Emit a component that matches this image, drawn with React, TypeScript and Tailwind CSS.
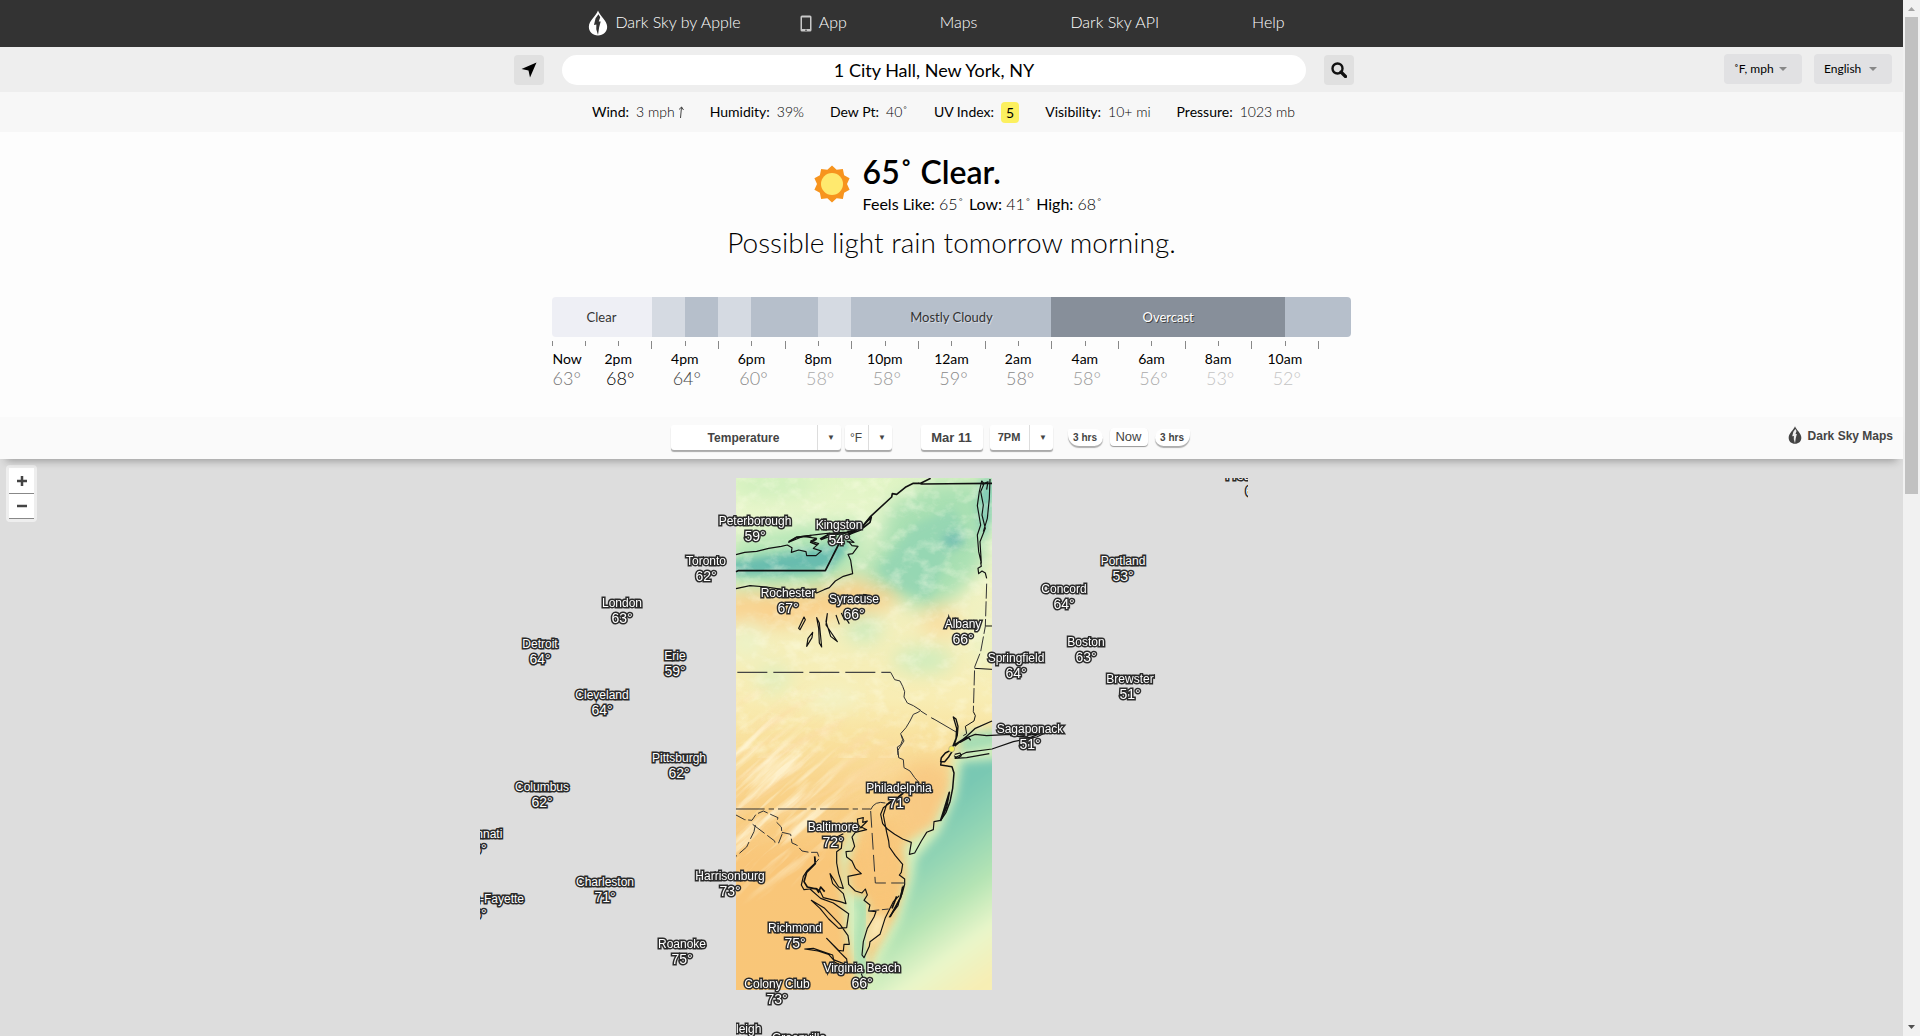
import React from "react";

const conditions = [
  { label: "Humidity:", value: "39%" },
  { label: "Dew Pt:", value: "40˚" },
];

const segments = [
  { span: "col-span-3", tone: "bg-[#eeeff5] text-[#333] rounded-l", text: "Clear" },
  { span: "col-span-1", tone: "bg-[#d5dae2]", text: "" },
  { span: "col-span-1", tone: "bg-[#b6bfcb]", text: "" },
  { span: "col-span-1", tone: "bg-[#d5dae2]", text: "" },
  { span: "col-span-2", tone: "bg-[#b6bfcb]", text: "" },
  { span: "col-span-1", tone: "bg-[#d5dae2]", text: "" },
  { span: "col-span-6", tone: "bg-[#b6bfcb] text-[#333] [text-shadow:1px_1px_0_#d5dae2]", text: "Mostly Cloudy" },
  { span: "col-span-7", tone: "bg-[#878f9a] text-white [text-shadow:1px_1px_0_#444]", text: "Overcast" },
  { span: "col-span-2", tone: "bg-[#b6bfcb] rounded-r-sm", text: "" },
];

const hours = [
  { time: "2pm", temp: "68°", tone: "text-black" },
  { time: "4pm", temp: "64°", tone: "text-[#444]" },
  { time: "6pm", temp: "60°", tone: "text-[#888]" },
  { time: "8pm", temp: "58°", tone: "text-[#aaa]" },
  { time: "10pm", temp: "58°", tone: "text-[#999]" },
  { time: "12am", temp: "59°", tone: "text-[#888]" },
  { time: "2am", temp: "58°", tone: "text-[#888]" },
  { time: "4am", temp: "58°", tone: "text-[#999]" },
  { time: "6am", temp: "56°", tone: "text-[#aaa]" },
  { time: "8am", temp: "53°", tone: "text-[#c4c4c4]" },
  { time: "10am", temp: "52°", tone: "text-[#c4c4c4]" },
];

const ticks = Array.from({ length: 24 }, (_, i) => i);

type City = { name: string; temp: string; x: number; y: number };

const cities: City[] = [
  { name: "Peterborough", temp: "59°", x: 275, y: 43 },
  { name: "Kingston", temp: "54°", x: 359, y: 47 },
  { name: "Toronto", temp: "62°", x: 226, y: 83 },
  { name: "Rochester", temp: "67°", x: 308, y: 115 },
  { name: "Syracuse", temp: "66°", x: 374, y: 121 },
  { name: "Albany", temp: "66°", x: 483, y: 146 },
  { name: "Springfield", temp: "64°", x: 536, y: 180 },
  { name: "Sagaponack", temp: "51°", x: 550, y: 251 },
  { name: "London", temp: "63°", x: 142, y: 125 },
  { name: "Detroit", temp: "64°", x: 60, y: 166 },
  { name: "Erie", temp: "59°", x: 195, y: 178 },
  { name: "Cleveland", temp: "64°", x: 122, y: 217 },
  { name: "Pittsburgh", temp: "62°", x: 199, y: 280 },
  { name: "Columbus", temp: "62°", x: 62, y: 309 },
  { name: "Cincinnati", temp: "66°", x: -4, y: 356 },
  { name: "Lexington-Fayette", temp: "66°", x: -4, y: 421 },
  { name: "Charleston", temp: "71°", x: 125, y: 404 },
  { name: "Harrisonburg", temp: "73°", x: 250, y: 398 },
  { name: "Roanoke", temp: "75°", x: 202, y: 466 },
  { name: "Philadelphia", temp: "71°", x: 419, y: 310 },
  { name: "Baltimore", temp: "72°", x: 353, y: 349 },
  { name: "Richmond", temp: "75°", x: 315, y: 450 },
  { name: "Virginia Beach", temp: "66°", x: 382, y: 490 },
  { name: "Colony Club", temp: "73°", x: 297, y: 506 },
  { name: "Portland", temp: "53°", x: 643, y: 83 },
  { name: "Concord", temp: "64°", x: 584, y: 111 },
  { name: "Boston", temp: "63°", x: 606, y: 164 },
  { name: "Brewster", temp: "51°", x: 650, y: 201 },
  { name: "Fredericton", temp: "62°", x: 776, y: -2 },
  { name: "Greenville", temp: "72°", x: 319, y: 560 },
];

function CityLabel({ name, temp, x, y }: City) {
  return (
    <div
      className="absolute -translate-x-1/2 whitespace-nowrap text-center leading-[15px] text-white [paint-order:stroke_fill] [-webkit-text-stroke:3px_#2a2a2a]"
      style={{ left: x, top: y - 7 }}
    >
      <div className="text-xs leading-[15px]">{name}</div>
      <div className="text-sm leading-[15px]">{temp}</div>
    </div>
  );
}

function DropLogo({ className, ink, cut }: { className: string; ink: string; cut: string }) {
  return (
    <svg viewBox="0 0 20 27" className={className} aria-hidden="true">
      <path d="M10 .5C11.500 5.500 19.500 11 19.500 17.500C19.500 23 15.500 26.500 10 26.500S.5 23 .5 17.500C.5 11 8.500 5.500 10 .5Z" fill={ink} />
      <path d="M10.500 4.500L7.500 8.500L5.800 15.500L8.300 15L8.200 20L10 26L11.200 18L12.800 12L10.800 12L12.300 7.500Z" fill={cut} />
    </svg>
  );
}

function Sun() {
  const points = Array.from({ length: 20 }, (_, i) => {
    const r = i % 2 ? 15 : 18.500;
    const a = (i * Math.PI) / 10 - Math.PI / 2;
    return `${19 + r * Math.cos(a)},${19 + r * Math.sin(a)}`;
  }).join(" ");
  return (
    <svg viewBox="0 0 38 38" className="size-[38px]" aria-hidden="true">
      <polygon points={points} fill="#f7941e" />
      <circle cx="19" cy="19" r="11" fill="#ffe96e" />
    </svg>
  );
}

function TemperatureTile() {
  return (
    <svg viewBox="0 0 256 512" className="absolute left-64 top-0 h-[512px] w-64 overflow-visible" aria-hidden="true">
      <defs>
        <clipPath id="tile"><rect width="256" height="512" /></clipPath>
        <linearGradient id="land" x1="0" x2="0" y1="0" y2="1">
          <stop offset="0" stopColor="#dff4c3" />
          <stop offset=".1" stopColor="#ecf7cf" />
          <stop offset=".3" stopColor="#f4efbb" />
          <stop offset=".43" stopColor="#f8edb4" />
          <stop offset=".5" stopColor="#f9e3a0" />
          <stop offset=".6" stopColor="#f9d48b" />
          <stop offset=".75" stopColor="#f9c679" />
          <stop offset="1" stopColor="#f9c678" />
        </linearGradient>
        <linearGradient id="sea" gradientUnits="userSpaceOnUse" x1="560" y1="330" x2="860" y2="740">
          <stop offset="0" stopColor="#79c8b3" />
          <stop offset=".25" stopColor="#93d5b4" />
          <stop offset=".5" stopColor="#b5e4b4" />
          <stop offset=".75" stopColor="#e9f6ca" />
          <stop offset="1" stopColor="#f7eeb4" />
        </linearGradient>
        <filter id="soft" x="-30%" y="-30%" width="160%" height="160%"><feGaussianBlur stdDeviation="14" /></filter>
        <filter id="softer" x="-40%" y="-40%" width="180%" height="180%"><feGaussianBlur stdDeviation="28" /></filter>
        <filter id="terrain" x="0" y="0" width="100%" height="100%">
          <feTurbulence type="fractalNoise" baseFrequency=".06 .08" numOctaves="5" seed="7" />
          <feColorMatrix values="0 0 0 0 1  0 0 0 0 1  0 0 0 0 .82  2.400 0 0 0 -1.100" />
        </filter>
        <filter id="ridges" x="0" y="0" width="100%" height="100%">
          <feTurbulence type="fractalNoise" baseFrequency=".012 .09" numOctaves="4" seed="11" />
          <feColorMatrix values="0 0 0 0 .97  0 0 0 0 .7  0 0 0 0 .38  3 0 0 0 -1.300" />
        </filter>
        <filter id="streaks" x="0" y="0" width="100%" height="100%">
          <feTurbulence type="fractalNoise" baseFrequency=".012 .11" numOctaves="4" seed="5" />
          <feColorMatrix values="0 0 0 0 1  0 0 0 0 .93  0 0 0 0 .7  3.500 0 0 0 -1.700" />
        </filter>
        <radialGradient id="fade"><stop offset="0" stopColor="#fff" /><stop offset=".5" stopColor="#fff" /><stop offset="1" stopColor="#000" /></radialGradient>
        <mask id="west"><ellipse cx="40" cy="290" rx="170" ry="90" fill="url(#fade)" /></mask>
        <mask id="southwest"><ellipse cx="20" cy="320" rx="110" ry="110" fill="url(#fade)" /></mask>
      </defs>
      <g clipPath="url(#tile)">
        <rect width="256" height="512" fill="url(#land)" />
        <g transform="translate(-36 -13) scale(.33333)">
          <g filter="url(#softer)">
            <ellipse cx="220" cy="60" rx="130" ry="30" fill="#cdefbd" />
            <path d="M90 220L300 180L500 170L470 340L380 380L90 370Z" fill="#b4e6b6" />
            <path d="M570 120L700 50L890 50L850 300L760 400L680 440L560 390L480 330L530 240Z" fill="#a9e0b3" />
            <path d="M60 390L340 375L450 340L610 390L560 430L300 480L60 490Z" fill="#fad08a" />
            <ellipse cx="720" cy="470" rx="60" ry="50" fill="#f9dfa2" />
            <ellipse cx="670" cy="585" rx="90" ry="38" fill="#cdecbd" />
            <ellipse cx="490" cy="490" rx="55" ry="45" fill="#cdecbf" />
            <ellipse cx="220" cy="640" rx="50" ry="40" fill="#deefc0" />
            <ellipse cx="400" cy="700" rx="80" ry="30" fill="#f2f3c8" />
            <ellipse cx="140" cy="520" rx="50" ry="60" fill="#ecf3c8" />
            <ellipse cx="850" cy="520" rx="30" ry="90" fill="#eaf4c8" />
          </g>
          <g filter="url(#soft)">
            <path d="M80 290L260 262L400 240L450 225L430 270L380 320L240 330L80 330Z" fill="#67bcae" />
            <path d="M640 180L760 130L800 200L730 300L690 400L610 380L530 320Z" fill="#8fd3b4" opacity=".7" />
            <ellipse cx="760" cy="225" rx="32" ry="20" fill="#72bdb2" />
            <path d="M845 40H880L868 180L845 220L838 140Z" fill="#76c6b4" />
          </g>
        </g>
        <rect width="256" height="280" filter="url(#terrain)" opacity=".4" />
        <g mask="url(#west)">
          <rect x="-200" y="60" width="600" height="480" filter="url(#ridges)" opacity=".55" transform="rotate(-32 40 290)" />
        </g>
        <g mask="url(#southwest)">
          <rect x="-200" y="60" width="600" height="480" filter="url(#streaks)" opacity=".8" transform="rotate(-42 40 290)" />
        </g>
        <g transform="translate(-36 257) scale(.33333)">
          <ellipse cx="680" cy="200" rx="90" ry="120" fill="#f8c983" filter="url(#softer)" />
          <ellipse cx="540" cy="350" rx="50" ry="100" fill="#f8c67c" filter="url(#softer)" />
          <path d="M780 0L900 -20V60L780 70Z" fill="#a5dcb4" filter="url(#soft)" />
          <path d="M760 60L900 30V800H480L520 660L590 540L620 430L610 330L700 270L750 160Z" fill="#d4efbd" filter="url(#soft)" />
          <path d="M785 80L920 70V820H500L545 670L600 560L640 430L650 370L720 290L770 180Z" fill="url(#sea)" filter="url(#soft)" />
          <path d="M455 280L480 260L440 400L450 470L505 500L500 640L520 780H480L440 600L430 500L420 360Z" fill="#d3efbf" filter="url(#soft)" />
          <path d="M470 490L490 520L480 640L490 720" fill="none" stroke="#a6deb0" strokeWidth="30" filter="url(#soft)" />
          <path d="M520 540L500 640L540 600L560 540Z" fill="#faefc0" filter="url(#soft)" />
        </g>
      </g>
      <g transform="translate(-36 -13) scale(.33333)" fill="none" stroke="#111" strokeWidth="3.500" strokeLinejoin="round">
        <path strokeWidth="5" d="M108 320L114 317H376L418 234L440 210L486 186L512 154L575 96L577 86L590 88L616 67L640 55H662L692 40M654 54L665 57L876 55" />
        <path d="M108 269L134 262L170 259L206 250L244 244L262 240L276 248L274 262L296 255L318 260L320 272L348 272L364 258L340 250L356 236L332 228L350 220L310 214L266 232L290 216L356 208L390 204L364 224L400 210L430 206L470 196L440 214L462 232L440 230" />
        <path strokeWidth="5" d="M266 230L290 217L334 212M350 222L332 232L352 240M360 222L390 206L440 202L484 188L514 156L510 172L480 196L436 212" />
        <path d="M446 230L456 242L474 244L458 266L444 268L452 286L458 326L430 334L406 348L388 368L372 374L350 384L338 374L300 382L250 374L200 366L150 362L108 371" />
        <path d="M312 456L316 464L300 494L296 490ZM338 502L336 518L320 544L324 520ZM350 458L358 474L365 546L358 534L356 490ZM382 446L378 480L412 530L392 514L378 470ZM408 450L418 478M424 444L434 466M470 390L508 392L490 388M434 454L448 476" />
        <path d="M845 48L852 56L842 80L850 120L846 150L856 190L840 230L844 294L836 260L832 210L842 180L832 122L838 80ZM870 42L868 100L862 160L850 200M846 58L864 50L860 74" />
        <path d="M842 292L844 304L834 310L836 326L846 318L856 324L860 340" />
        <path strokeWidth="3" stroke="#333" strokeDasharray="45 8" d="M860 356L856 484L842 560L824 606L820 740" />
        <path strokeWidth="3" d="M856 483H876M824 610L876 613M820 740L826 752L822 768L796 784L800 806L790 812" />
        <path strokeWidth="4" stroke="#444" strokeDasharray="90 18" d="M112 622H572" />
        <path strokeWidth="3" stroke="#333" d="M572 622L584 644L600 648L608 664L614 680L612 696L622 714L640 722L662 736L654 742L640 748L630 768L618 788L602 806L608 824L602 840L592 846L594 870" />
        <path strokeWidth="3" stroke="#333" strokeDasharray="22 15" d="M662 738L700 762" />
        <path strokeWidth="3" stroke="#333" d="M698 760L770 802" />
        <path strokeWidth="4" d="M760 756L768 762L774 784L772 810L764 836L756 850L768 820L770 790ZM762 840L790 822L826 808L860 812L930 808L985 810M764 844L800 814L826 790L876 768M780 832L806 818L812 826" />
        <path d="M764 878L800 862L876 852L940 830L1010 816L1060 792L1020 806L960 814M930 812L990 818L1020 806M984 808L1030 794L1042 796" />
      </g>
      <g transform="translate(-36 257) scale(.33333)" fill="none" stroke="#111" strokeWidth="3.500" strokeLinejoin="round">
        <path d="M764 58L780 54L784 62L772 70L762 62M764 70L800 68L868 56" />
        <path strokeWidth="4.500" d="M752 46L736 54L724 68L722 80L734 80L746 66L756 50M724 78L722 90L756 95L762 114L758 160L750 200L738 232L722 256" />
        <path strokeWidth="5" d="M748 172L740 216L722 256L732 224ZM610 174L588 192L566 204" />
        <path d="M722 256L702 260L700 284L680 292L664 318L644 354L628 358L634 322L608 312L584 298L562 282L548 266L542 238L550 218L580 196L560 208L550 240L560 292L566 318L568 336L586 362L608 388L604 412L598 420L614 432L614 448L606 478L580 530L568 546L594 512L610 452" />
        <path strokeWidth="5" d="M608 456L602 488L570 546M590 484L576 520" />
        <path d="M598 482L580 500L556 548L540 598L510 620L508 634L492 668L486 660L490 620L502 580L522 546L528 530L506 528L510 510L492 496L502 480L496 462L486 474L466 468L446 448L444 424L484 416L466 400L456 378L440 366L438 350L456 348L464 334L456 306L466 292L500 284L484 276L502 258L488 262L490 248L472 252L474 268L484 280" />
        <path d="M430 296L410 306L426 320L424 340L410 350L410 384L416 416L430 460L416 456L390 416L398 446L430 476L438 506L420 500L370 488L360 468L348 460L330 462L312 464L304 450L310 424L322 406L346 384L344 368" />
        <path strokeWidth="5" d="M344 364L346 386L320 412L312 440L322 456L350 462L356 472L362 456L374 470" />
        <path d="M330 462L362 490L400 504L446 536L440 578L416 580L386 552L360 520L334 496L374 520L420 568L444 602L448 628L432 628L430 648L416 646L380 610L420 652L440 672L442 690L400 674L386 658L354 648L314 642L340 640L398 660L402 680L420 690M484 716L494 744L500 762" />
        <g stroke="#333" strokeWidth="3">
          <path d="M604 0L612 18L600 36L594 46L596 68L610 74L612 98L630 108L644 128L658 144" />
          <path strokeDasharray="86 12 16 12" d="M108 222H512" />
          <path d="M512 224Q524 196 556 204" />
          <path strokeDasharray="50 16" d="M512 228L526 444H614" />
          <path strokeDasharray="32 8" d="M506 528L566 522M108 240L134 254L156 256L168 238L190 228L216 240L234 248L230 262L244 276L246 298L236 324L222 320M246 292L272 298L276 324L290 330L306 348L328 352L352 352L358 370L346 384" />
          <path strokeDasharray="45 10" d="M158 268L224 318M166 270L162 290L152 310L140 336L108 364" />
        </g>
      </g>
      <circle cx="215.700" cy="271" r="3" fill="#f8ee5e" stroke="#888" strokeWidth=".5" />
    </svg>
  );
}

const box = "bg-white rounded-[3px] shadow-[0_2px_1px_rgba(0,0,0,0.32)]";

function PickerSelect({ label, option, className }: { label: string; option: string; className: string }) {
  return (
    <div className={`relative flex h-[25px] text-[#444] ${box}`}>
      <select aria-label={label} className={`appearance-none border-0 bg-transparent pr-6 text-center ${className}`}>
        <option>{option}</option>
      </select>
      <span className="pointer-events-none absolute inset-y-0 right-0 flex w-6 items-center justify-center border-l border-[#ddd] pl-1 text-[8px]">▼</span>
    </div>
  );
}

function UnitSelect({ label, option }: { label: string; option: string }) {
  return (
    <div className="relative">
      <select aria-label={label} className="h-[30px] w-[78px] appearance-none rounded bg-[#e1e1e3] pl-2.5 text-xs text-black">
        <option>{option}</option>
      </select>
      <svg viewBox="0 0 8 4" className="pointer-events-none absolute right-[15px] top-[13px] h-1 w-2" aria-hidden="true">
        <path d="M0 0H8L4 4Z" fill="#888" />
      </svg>
    </div>
  );
}

export default function App() {
  return (
    <div className="flex min-h-screen bg-[#fdfdfd] font-['Lato',sans-serif] text-black">
      <div className="flex min-w-0 flex-1 flex-col">
        <nav className="flex h-[47px] justify-center bg-[#333] pr-[30px] text-base font-light leading-[43px] text-white">
          <a href="#home" className="mr-[59px] flex">
            <DropLogo className="mr-[7px] mt-2.5 h-[26px] w-5" ink="#fff" cut="#333" />
            Dark Sky by Apple
          </a>
          <a href="#app" className="mr-[93px] flex">
            <svg viewBox="0 0 12 17" className="mr-[7px] mt-[15px] h-[17px] w-3" aria-hidden="true">
              <rect x=".5" y=".5" width="11" height="16" rx="1.500" fill="#c9c9c9" />
              <rect x="2" y="2.500" width="8" height="11.500" fill="#333" />
              <circle cx="6" cy="15.300" r=".8" fill="#333" />
            </svg>
            App
          </a>
          <a href="#maps" className="mr-[93px]">Maps</a>
          <a href="#api" className="mr-[93px]">Dark Sky API</a>
          <a href="#help">Help</a>
        </nav>

        <form className="grid h-[45px] grid-cols-[1fr_auto_1fr] bg-[#eee]" onSubmit={(e) => e.preventDefault()}>
          <div />
          <div className="mr-[35px] flex items-center gap-[18px] pt-px">
            <button type="button" aria-label="Use current location" className="flex size-[30px] items-center justify-center rounded bg-[#e0e0e0]">
              <svg viewBox="0 0 16 16" className="size-4" aria-hidden="true">
                <path d="M15.500 .5L9 15.500L7.500 8.500L.5 7Z" fill="#000" />
              </svg>
            </button>
            <input aria-label="Location" defaultValue="1 City Hall, New York, NY" className="h-[30px] w-[744px] rounded-full bg-white text-center text-lg outline-none" />
            <button type="submit" aria-label="Search" className="flex size-[30px] items-center justify-center rounded bg-[#e0e0e0]">
              <svg viewBox="0 0 16 16" className="size-4" aria-hidden="true">
                <circle cx="6.500" cy="6.500" r="5" fill="none" stroke="#111" strokeWidth="2.400" />
                <path d="M10 10L14.500 14.500" stroke="#111" strokeWidth="3.200" strokeLinecap="round" />
              </svg>
            </button>
          </div>
          <div className="flex items-start justify-end gap-3 pr-[11px] pt-[7px]">
            <UnitSelect label="Units" option="˚F, mph" />
            <UnitSelect label="Language" option="English" />
          </div>
        </form>

        <section className="flex h-10 items-center justify-center gap-[26px] bg-[#f7f7f7] pr-4 text-sm">
          <div className="flex gap-[7px]">
            Wind:
            <span className="flex items-center gap-[3px] font-light">
              3 mph
              <svg viewBox="0 0 6 12" className="h-3 w-1.5" fill="none" stroke="#444" aria-label="from the south">
                <path d="M2.500 12L3.500 1M1 3.500L3.600 1L5.500 4" />
              </svg>
            </span>
          </div>
          {conditions.map((c) => (
            <div key={c.label} className="flex gap-[7px]">{c.label} <span className="font-light">{c.value}</span></div>
          ))}
          <div className="flex items-center gap-[7px]">UV Index: <span className="rounded-sm bg-[#fcf05f] px-[5px] leading-[21px]">5</span></div>
          <div className="flex gap-[7px]">Visibility: <span className="font-light">10+ mi</span></div>
          <div className="flex gap-[7px]">Pressure: <span className="font-light">1023 mb</span></div>
        </section>

        <main className="flex flex-col items-center">
          <div className="mt-5 flex gap-3 pl-3">
            <div className="mt-[13px]"><Sun /></div>
            <div>
              <h1 className="text-[32px] font-semibold leading-10">65˚ Clear.</h1>
              <p className="flex gap-[5px] text-base leading-6">
                <span>Feels Like: <span className="font-light">65˚</span></span>
                <span>Low: <span className="font-light">41˚</span></span>
                <span>High: <span className="font-light">68˚</span></span>
              </p>
            </div>
          </div>
          <p className="mt-[7px] text-[28px] font-light leading-[38px]">Possible light rain tomorrow morning.</p>

          <div className="mt-9 w-[800px]">
            <div className="grid h-10 grid-cols-24 text-[13px] leading-10">
              {segments.map((s, i) => (
                <div key={i} className={`text-center ${s.span} ${s.tone}`}>{s.text}</div>
              ))}
            </div>
            <div className="mt-1 grid h-2 grid-cols-24">
              {ticks.map((i) => (
                <span key={i} className={`w-px bg-[#888] ${i > 2 && i % 2 ? "h-2" : "h-[5px]"}`} />
              ))}
            </div>
            <div className="mt-px grid h-[67px] grid-cols-24 text-sm">
              <div className="pl-px">
                <div className="leading-[18px]">Now</div>
                <div className="text-lg font-light leading-5 text-[#777]">63°</div>
              </div>
              {hours.map((h) => (
                <div key={h.time} className="col-span-2 text-center">
                  <div className="leading-[18px]">{h.time}</div>
                  <div className={`pl-1 text-lg font-light leading-5 ${h.tone}`}>{h.temp}</div>
                </div>
              ))}
            </div>
          </div>
        </main>

        <section className="z-10 grid h-[42px] grid-cols-[1fr_auto_1fr] bg-[#fafafa] font-['Liberation_Sans',Arial,sans-serif] text-[#444] shadow-[0_8px_8px_-6px_rgba(0,0,0,0.3)]">
          <div />
          <div className="mr-[43px] flex pt-2">
            <PickerSelect label="Map layer" option="Temperature" className="w-[170px] text-xs font-bold" />
            <div className="w-1" />
            <PickerSelect label="Temperature unit" option="°F" className="w-[47px] text-xs" />
            <button className={`ml-[29px] h-[25px] w-[62px] text-[13px] font-bold ${box}`}>Mar 11</button>
            <div className="w-[7px]" />
            <PickerSelect label="Hour" option="7PM" className="w-[63px] text-[11px] font-bold" />
            <button className="ml-[15px] mt-1 h-[17px] w-[35px] rounded-[2px_9px_9px_12px] bg-white text-[10px] font-bold leading-4 shadow-[0_2px_1px_rgba(0,0,0,0.3)]">3 hrs</button>
            <button className="ml-[7px] mt-[3px] h-[18px] w-[38px] rounded-sm bg-white text-[13px] leading-4 shadow-[0_1px_1px_rgba(0,0,0,0.4)]">Now</button>
            <button className="ml-[7px] mt-1 h-[17px] w-[35px] rounded-[9px_2px_12px_9px] bg-white text-[10px] font-bold leading-4 shadow-[0_2px_1px_rgba(0,0,0,0.3)]">3 hrs</button>
          </div>
          <a href="#dark-sky-maps" className="flex items-center justify-end pb-1 pr-2.5 text-xs font-bold">
            <DropLogo className="mb-[3px] mr-1.5 h-[18px] w-3.5" ink="#444" cut="#eee" />
            Dark Sky Maps
          </a>
        </section>

        <section aria-label="Temperature map" className="relative min-h-[400px] flex-1 overflow-hidden bg-[#ddd] font-['Liberation_Sans',Arial,sans-serif]">
          <div className="absolute bottom-0 left-[480px] top-[19px] w-[768px] overflow-hidden">
            <TemperatureTile />
            {cities.map((c) => (
              <CityLabel key={c.name} {...c} />
            ))}
            <div className="absolute inset-y-0 left-64 w-64 overflow-hidden">
              <CityLabel name="Raleigh" temp="75°" x={5} y={551} />
            </div>
          </div>
          <div className="absolute left-1.5 top-1.5 flex flex-col gap-px rounded border-[3px] border-[#eee] bg-[#888] text-[#444]">
            {["Zoom in", "Zoom out"].map((label, i) => (
              <button key={label} aria-label={label} className="flex h-[25px] w-[25px] items-center justify-center bg-white last:border-b last:border-[#888]">
                <svg viewBox="0 0 10 10" className="size-2.5" aria-hidden="true">
                  <path d={i === 0 ? "M0 5H10M5 0V10" : "M0 5H10"} stroke="#444" strokeWidth="2.500" />
                </svg>
              </button>
            ))}
          </div>
        </section>
      </div>

      <div className="flex w-[17px] flex-col items-center bg-[#f1f1f1]" aria-hidden="true">
        <svg viewBox="0 0 17 17" className="size-[17px]"><path d="M5 11L8.500 7L12 11Z" fill="#a3a3a3" /></svg>
        <div className="h-[477px] w-[13px] bg-[#c1c1c1]" />
        <svg viewBox="0 0 17 17" className="mt-auto size-[17px]"><path d="M5 6L8.500 10L12 6Z" fill="#505050" /></svg>
      </div>
    </div>
  );
}
